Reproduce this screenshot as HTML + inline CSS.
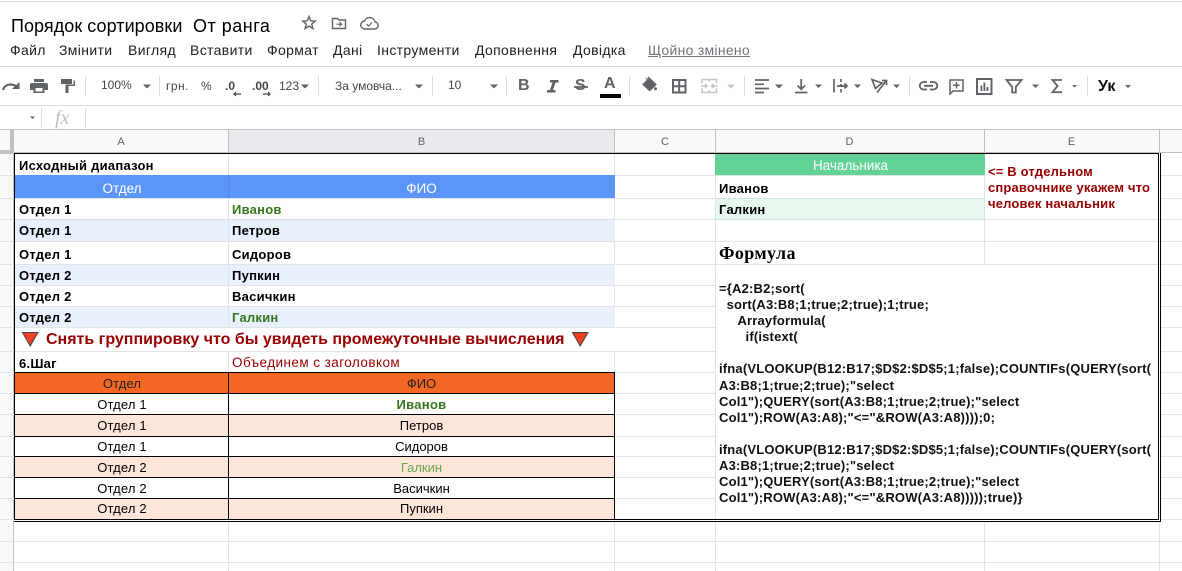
<!DOCTYPE html>
<html><head><meta charset="utf-8">
<style>
html,body{margin:0;padding:0;background:#fff}
body{width:1182px;height:571px;overflow:hidden;position:relative;font-family:"Liberation Sans",sans-serif;color:#000}
.t{position:absolute;white-space:pre;line-height:16px}
.m{font-size:14px;color:#202124;top:42px;letter-spacing:.35px}
.tb{font-size:12px;color:#444746;top:78px}
.b{font-weight:bold;font-size:13px;letter-spacing:.25px}
.c{font-size:13px;text-align:center}
.l{letter-spacing:.15px}
.h{font-size:11px;color:#5f6368;top:134px;text-align:center}
svg{position:absolute;left:0;top:0}
</style></head><body>
<svg width="1182" height="571" shape-rendering="crispEdges">
<rect x="0" y="1" width="1182" height="1" fill="#dadce0"/>
<rect x="0" y="66" width="1182" height="1" fill="#dadce0"/>
<rect x="0" y="105" width="1182" height="1" fill="#dadce0"/>
<rect x="0" y="129" width="1182" height="1" fill="#c0c0c0"/>
<g fill="#dadce0">
<rect x="85" y="76" width="1" height="20"/><rect x="159" y="76" width="1" height="20"/><rect x="318" y="76" width="1" height="20"/><rect x="432" y="76" width="1" height="20"/><rect x="506" y="76" width="1" height="20"/><rect x="629" y="76" width="1" height="20"/><rect x="744" y="76" width="1" height="20"/><rect x="909" y="76" width="1" height="20"/><rect x="1087" y="76" width="1" height="20"/>
<rect x="41" y="108" width="1" height="20"/><rect x="85" y="108" width="1" height="20"/>
</g>
<!-- headers -->
<rect x="0" y="130" width="1182" height="23" fill="#f8f9fa"/>
<rect x="228" y="130" width="387" height="23" fill="#e8eaed"/>
<rect x="0" y="153" width="14" height="418" fill="#f8f9fa"/>
<rect x="0" y="152" width="1182" height="1" fill="#c0c0c0"/>
<rect x="10" y="130" width="4" height="24" fill="#c0c0c0"/>
<rect x="0" y="150" width="14" height="4" fill="#c0c0c0"/>
<g fill="#c0c0c0"><rect x="228" y="130" width="1" height="23"/><rect x="614" y="130" width="1" height="23"/><rect x="715" y="130" width="1" height="23"/><rect x="984" y="130" width="1" height="23"/><rect x="1159" y="130" width="1" height="23"/><rect x="13" y="153" width="1" height="418"/></g>
<!-- row lines -->
<g fill="#e2e3e3">
<rect x="0" y="175" width="1182" height="1"/><rect x="0" y="198" width="1182" height="1"/><rect x="0" y="219" width="1182" height="1"/><rect x="0" y="241" width="1182" height="1"/><rect x="0" y="264" width="1182" height="1"/><rect x="0" y="285" width="715" height="1"/><rect x="0" y="306" width="715" height="1"/><rect x="0" y="327" width="715" height="1"/><rect x="0" y="351" width="715" height="1"/><rect x="0" y="372" width="715" height="1"/><rect x="0" y="393" width="715" height="1"/><rect x="0" y="414" width="715" height="1"/><rect x="0" y="436" width="715" height="1"/><rect x="0" y="456" width="715" height="1"/><rect x="0" y="477" width="715" height="1"/><rect x="0" y="498" width="715" height="1"/>
<rect x="1160" y="285" width="22" height="1"/><rect x="1160" y="306" width="22" height="1"/><rect x="1160" y="327" width="22" height="1"/><rect x="1160" y="351" width="22" height="1"/><rect x="1160" y="372" width="22" height="1"/><rect x="1160" y="393" width="22" height="1"/><rect x="1160" y="414" width="22" height="1"/><rect x="1160" y="436" width="22" height="1"/><rect x="1160" y="456" width="22" height="1"/><rect x="1160" y="477" width="22" height="1"/><rect x="1160" y="498" width="22" height="1"/>
<rect x="0" y="519" width="1182" height="1"/><rect x="0" y="541" width="1182" height="1"/><rect x="0" y="562" width="1182" height="1"/>
<rect x="228" y="153" width="1" height="418"/><rect x="614" y="153" width="1" height="418"/><rect x="715" y="153" width="1" height="418"/><rect x="984" y="153" width="1" height="418"/><rect x="1159" y="153" width="1" height="418"/>
</g>
<!-- fills -->
<rect x="15" y="328" width="700" height="23" fill="#fff"/>
<rect x="14" y="175" width="601" height="23" fill="#5b95f9"/>
<rect x="228" y="175" width="1" height="23" fill="#5489e3"/>
<rect x="14" y="219" width="601" height="1" fill="#d9dfe9"/>
<rect x="14" y="220" width="601" height="21" fill="#e8f0fe"/>
<rect x="14" y="265" width="601" height="20" fill="#e8f0fe"/>
<rect x="14" y="307" width="601" height="20" fill="#e8f0fe"/>
<rect x="228" y="198" width="1" height="129" fill="#dde3ea"/>
<rect x="14" y="372" width="601" height="21" fill="#f56723"/>
<rect x="14" y="415" width="601" height="21" fill="#fee5da"/>
<rect x="14" y="457" width="601" height="20" fill="#fee5da"/>
<rect x="14" y="499" width="601" height="20" fill="#fee5da"/>
<rect x="715" y="154" width="270" height="21" fill="#63d297"/>
<rect x="716" y="198" width="268" height="21" fill="#e7f9ef"/>
<rect x="716" y="198" width="269" height="1" fill="#d5e3dc"/><rect x="716" y="219" width="269" height="1" fill="#d5e3dc"/><rect x="984" y="198" width="1" height="22" fill="#d5e3dc"/>
<rect x="716" y="265" width="443" height="254" fill="#fff"/>
<rect x="985" y="154" width="174" height="65" fill="#fff"/>
<!-- black table borders -->
<g fill="#000">
<rect x="14" y="372" width="601" height="1"/><rect x="14" y="393" width="601" height="1"/><rect x="14" y="414" width="601" height="1"/><rect x="14" y="436" width="601" height="1"/><rect x="14" y="456" width="601" height="1"/><rect x="14" y="477" width="601" height="1"/><rect x="14" y="498" width="601" height="1"/>
<rect x="228" y="372" width="1" height="147"/><rect x="614" y="372" width="1" height="147"/>
<!-- double outer -->
<rect x="14" y="153" width="1146" height="1"/>
<rect x="14" y="153" width="1" height="368"/>
<rect x="14" y="519" width="1145" height="1"/><rect x="14" y="521" width="1147" height="1"/>
<rect x="1158" y="153" width="1" height="367"/><rect x="1159" y="153" width="1" height="367" fill="#fff"/><rect x="1160" y="153" width="1" height="369"/>
<rect x="14" y="520" width="1146" height="1" fill="#fff"/>
</g>
<!-- triangles -->
<path shape-rendering="auto" d="M22.5 332.5H38L30.2 346Z" fill="#ee4023" stroke="#434343"/>
<path shape-rendering="auto" d="M572.5 332.5H588L580.2 346Z" fill="#ee4023" stroke="#434343"/>
<g shape-rendering="auto">
<!-- title icons -->
<path d="M309 16.5l1.7 4.3 4.6.3-3.6 3 1.2 4.500-3.900-2.500-3.900 2.500 1.200-4.500-3.600-3 4.600-.3z" fill="none" stroke="#5f6368" stroke-width="1.400"/>
<path d="M332.500 18.500h5l1.500 1.500h6.500v8.500h-13z" fill="none" stroke="#5f6368" stroke-width="1.400"/>
<path d="M336.500 24.200h5m-2-2l2.200 2-2.200 2" fill="none" stroke="#5f6368" stroke-width="1.200"/>
<path d="M365 29h9.500a3.500 3.500 0 0 0 .5-7 5.500 5.500 0 0 0-10.500-1 4 4 0 0 0 .5 8z" fill="none" stroke="#5f6368" stroke-width="1.400"/>
<path d="M366.500 24l2 2 3.500-3.500" fill="none" stroke="#5f6368" stroke-width="1.200"/>
<!-- redo -->
<path d="M3 90c1-4 4.500-5.500 7.500-5.500 2.500 0 4.500 1 5.500 2" fill="none" stroke="#5f6368" stroke-width="2.200"/><path d="M12 89h7.500v-7z" fill="#5f6368"/>
<!-- print -->
<path d="M34 79h10v3H34zM32 83h14a2 2 0 0 1 2 2v5h-3.500v3H33.500v-3H30v-5a2 2 0 0 1 2-2z" fill="#5f6368"/><rect x="35.500" y="88" width="7" height="3.500" fill="#fff"/>
<!-- paint -->
<path d="M61 79h11v5H61zM73.500 80.500H75v5.500h-6.500v7h-3v-8.500h8z" fill="#5f6368"/>
<!-- dropdown arrows -->
<path fill="#5f6368" d="M143 84.500h8l-4 4zM301 84.500h8l-4 4zM415 84.500h8l-4 4zM490 84.500h8l-4 4zM775 84.500h8l-4 4zM815 84.500h7l-3.500 3.500zM854 84.500h7l-3.500 3.500zM893 84.500h7l-3.500 3.500zM1032 84.500h7l-3.500 3.500zM1072 85h5l-2.500 2.500zM1125 85h6l-3 3zM30 116.500h5l-2.500 2.500z"/>
<path fill="#c4c7c5" d="M727 84.500h8l-4 4z"/>
<!-- dec arrows -->
<path d="M234 94h7M236 92l-2 2 2 2" fill="none" stroke="#444" stroke-width="1.200"/>
<path d="M263 94h7M268 92l2 2-2 2" fill="none" stroke="#444" stroke-width="1.200"/>
<!-- italic I & strike -->
<path d="M550 80h8.500v2.500h-3l-2.500 7.500h2.500v2.500H547V90h3l2.500-7.500H550z" fill="#5f6368"/>
<path d="M574 87h14" stroke="#5f6368" stroke-width="1.800"/>
<!-- fill -->
<path d="M648 77l8 7.500-5.500 5.500a1 1 0 0 1-1.500 0l-6-5.500 5.500-5.500M646 78l3 3" fill="#5f6368" stroke="#5f6368" stroke-width="1.200"/>
<circle cx="655.500" cy="88.700" r="1.500" fill="#5f6368"/>
<!-- borders -->
<path d="M673 80h12.500v12.500H673zM679.200 80v12.500M673 86.200h12.500" fill="none" stroke="#5f6368" stroke-width="2"/>
<!-- merge -->
<path d="M702 83v-3.500h14.500V83M702 88.500V92.500h14.500v-4M701 86h5.500m-1.500-1.800l2 1.800-2 1.800M717.500 86H712m1.500-1.800l-2 1.800 2 1.800M709.200 79.500v2M709.200 90.500v2" fill="none" stroke="#c4c7c5" stroke-width="1.600"/>
<!-- align -->
<path d="M755 80h14M755 84.300h9M755 88.500h14M755 92.500h9" fill="none" stroke="#5f6368" stroke-width="1.700"/>
<!-- valign -->
<path d="M795 92.500h12.500M801.200 79v10M797.500 85.500l3.700 3.800 3.800-3.800" fill="none" stroke="#5f6368" stroke-width="1.700"/>
<!-- wrap -->
<path d="M834 79v13.500M841 79v3M841 84v3M841 89v3.500M837 86h10M844.500 83.500L847 86l-2.500 2.500" fill="none" stroke="#5f6368" stroke-width="1.700"/>
<!-- rotate -->
<path d="M872 79.500l10 3.500-6.500 5.500zM877 92.500l9.500-12M882 80.500h4.500v4.500" fill="none" stroke="#5f6368" stroke-width="1.700"/>
<!-- link -->
<path d="M927 82h-3.500a3.700 3.700 0 0 0 0 7.500H927M930 82h3.500a3.700 3.700 0 0 1 0 7.500H930M924 85.800h9" fill="none" stroke="#5f6368" stroke-width="1.800"/>
<!-- comment -->
<path d="M950 80h13v11h-10l-3 3zM956.500 82v6.500M953.200 85.300h6.500" fill="none" stroke="#5f6368" stroke-width="1.500"/>
<!-- chart -->
<path d="M977 79h14.500v15H977z" fill="none" stroke="#5f6368" stroke-width="2"/><path d="M980.500 85.500h1.800V91h-1.800zM983.500 82.500h1.800V91h-1.800zM986.500 87h1.800v4h-1.800z" fill="#5f6368"/>
<!-- filter -->
<path d="M1006.500 80h15l-5.700 7v5.500h-3.600V87z" fill="none" stroke="#5f6368" stroke-width="1.800"/>
<!-- sigma -->
<path d="M1062 80h-9.500l5 6-5 6.200h9.500" fill="none" stroke="#5f6368" stroke-width="1.800"/>
</g>
</svg>

<div class="t" style="left:11px;top:14px;font-size:18px;line-height:24px;color:#000;letter-spacing:.05px">Порядок сортировки</div>
<div class="t" style="left:193px;top:14px;font-size:18px;line-height:24px;color:#000;letter-spacing:.5px">От ранга</div>
<div class="t m" style="left:10px">Файл</div>
<div class="t m" style="left:59px">Змінити</div>
<div class="t m" style="left:128px">Вигляд</div>
<div class="t m" style="left:190px">Вставити</div>
<div class="t m" style="left:267px">Формат</div>
<div class="t m" style="left:333px">Дані</div>
<div class="t m" style="left:377px">Інструменти</div>
<div class="t m" style="left:475px">Доповнення</div>
<div class="t m" style="left:573px">Довідка</div>
<div class="t m" style="left:648px;color:#70757a;text-decoration:underline;letter-spacing:.28px">Щойно змінено</div>

<div class="t tb" style="left:101px;top:77px">100%</div>
<div class="t tb" style="left:166px;letter-spacing:.5px">грн.</div>
<div class="t tb" style="left:201px">%</div>
<div class="t tb" style="left:225px;font-weight:bold">.0</div>
<div class="t tb" style="left:252px;font-weight:bold">.00</div>
<div class="t tb" style="left:279px">123</div>
<div class="t tb" style="left:335px">За умовча...</div>
<div class="t tb" style="left:448px;top:77px">10</div>
<div class="t" style="left:518px;top:78px;font-size:16px;font-weight:bold;color:#5f6368">B</div>
<div class="t" style="left:575px;top:78px;font-size:16px;font-weight:bold;color:#5f6368">S</div>
<div class="t" style="left:604px;top:76px;font-size:16px;font-weight:bold;color:#5f6368">A</div>
<div style="position:absolute;left:600px;top:94px;width:21px;height:4px;background:#000"></div>
<div class="t" style="left:1098px;top:79px;font-size:16px;font-weight:bold;color:#111">Ук</div>
<div class="t" style="left:55px;top:109px;font-family:'Liberation Serif',serif;font-style:italic;font-size:20px;line-height:18px;color:#bdc1c6">fx</div>

<div class="t h" style="left:14px;width:214px">A</div>
<div class="t h" style="left:228px;width:387px">B</div>
<div class="t h" style="left:615px;width:100px">C</div>
<div class="t h" style="left:715px;width:269px">D</div>
<div class="t h" style="left:984px;width:175px">E</div>

<div class="t b" style="left:19px;top:158px">Исходный диапазон</div>
<div class="t c" style="left:15px;width:214px;top:181px;color:#fff;font-size:13.500px">Отдел</div>
<div class="t c" style="left:228px;width:387px;top:181px;color:#fff;font-size:13.500px">ФИО</div>
<div class="t b" style="left:19px;top:202px">Отдел 1</div><div class="t b" style="left:232px;top:202px;color:#38761d">Иванов</div>
<div class="t b" style="left:19px;top:223px">Отдел 1</div><div class="t b" style="left:232px;top:223px">Петров</div>
<div class="t b" style="left:19px;top:247px">Отдел 1</div><div class="t b" style="left:232px;top:247px">Сидоров</div>
<div class="t b" style="left:19px;top:268px">Отдел 2</div><div class="t b" style="left:232px;top:268px">Пупкин</div>
<div class="t b" style="left:19px;top:289px">Отдел 2</div><div class="t b" style="left:232px;top:289px">Васичкин</div>
<div class="t b" style="left:19px;top:310px">Отдел 2</div><div class="t b" style="left:232px;top:310px;color:#38761d">Галкин</div>
<div class="t" style="left:46px;top:332px;font-size:16px;font-weight:bold;color:#980000">Снять группировку что бы увидеть промежуточные вычисления</div>
<div class="t b" style="left:19px;top:356px">6.Шаг</div>
<div class="t" style="left:232px;top:355px;font-size:13.500px;color:#980000;letter-spacing:.44px">Объединем с заголовком</div>

<div class="t c l" style="left:15px;width:214px;top:376px;color:#222">Отдел</div><div class="t c" style="left:228px;width:387px;top:376px;color:#222">ФИО</div>
<div class="t c l" style="left:15px;width:214px;top:397px">Отдел 1</div><div class="t c" style="left:228px;width:387px;top:397px;color:#38761d;font-weight:bold;letter-spacing:.3px">Иванов</div>
<div class="t c l" style="left:15px;width:214px;top:418px">Отдел 1</div><div class="t c" style="left:228px;width:387px;top:418px">Петров</div>
<div class="t c l" style="left:15px;width:214px;top:439px">Отдел 1</div><div class="t c" style="left:228px;width:387px;top:439px">Сидоров</div>
<div class="t c l" style="left:15px;width:214px;top:460px">Отдел 2</div><div class="t c" style="left:228px;width:387px;top:460px;color:#6aa84f">Галкин</div>
<div class="t c l" style="left:15px;width:214px;top:481px">Отдел 2</div><div class="t c" style="left:228px;width:387px;top:481px">Васичкин</div>
<div class="t c l" style="left:15px;width:214px;top:501px">Отдел 2</div><div class="t c" style="left:228px;width:387px;top:501px">Пупкин</div>

<div class="t c" style="left:716px;width:269px;top:158px;color:#fff;font-size:13.500px">Начальника</div>
<div class="t b" style="left:719px;top:181px">Иванов</div>
<div class="t b" style="left:719px;top:202px">Галкин</div>
<div class="t" style="left:719px;top:243px;font-family:'Liberation Serif',serif;font-size:18px;font-weight:bold;line-height:20px;letter-spacing:.4px">Формула</div>
<div class="t" style="left:988px;top:164px;font-size:13px;font-weight:bold;color:#980000;line-height:16px;letter-spacing:.17px">&lt;= В отдельном
справочнике укажем что
человек начальник</div>
<div class="t" style="left:719px;top:281px;font-size:13px;font-weight:bold;line-height:16.100px;color:#111;letter-spacing:.18px">={A2:B2;sort(
  sort(A3:B8;1;true;2;true);1;true;
     Arrayformula(
       if(istext(

ifna(VLOOKUP(B12:B17;$D$2:$D$5;1;false);COUNTIFs(QUERY(sort(
A3:B8;1;true;2;true);"select
Col1");QUERY(sort(A3:B8;1;true;2;true);"select
Col1");ROW(A3:A8);"&lt;="&amp;ROW(A3:A8))));0;

ifna(VLOOKUP(B12:B17;$D$2:$D$5;1;false);COUNTIFs(QUERY(sort(
A3:B8;1;true;2;true);"select
Col1");QUERY(sort(A3:B8;1;true;2;true);"select
Col1");ROW(A3:A8);"&lt;="&amp;ROW(A3:A8)))));true)}</div>
</body></html>
